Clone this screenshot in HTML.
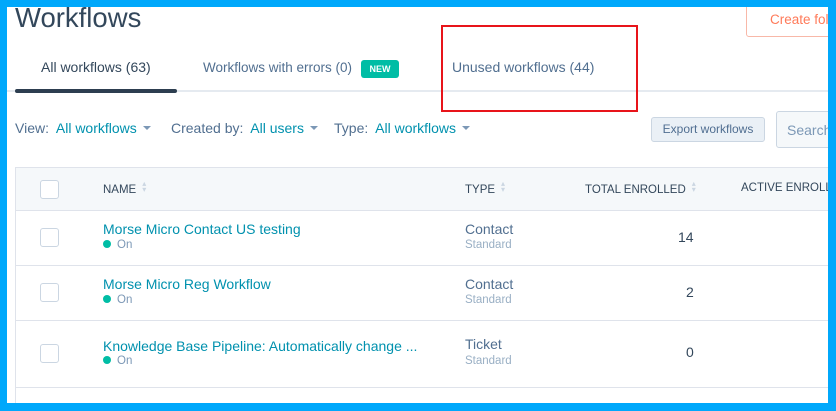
<!DOCTYPE html>
<html><head><meta charset="utf-8"><style>
*{margin:0;padding:0;box-sizing:border-box}
html,body{width:836px;height:411px;overflow:hidden;background:#00a8fb;font-family:"Liberation Sans",sans-serif}
#pg{position:absolute;left:7px;top:7px;width:821px;height:396px;background:#fff;overflow:hidden}
.a{position:absolute;white-space:nowrap}
.link{color:#0091ae}
.cb{position:absolute;width:19px;height:19px;border:1.5px solid #cbd6e2;border-radius:3px;background:#fff}
.dot{display:inline-block;width:8px;height:8px;border-radius:50%;background:#00bda5;margin-right:6px;vertical-align:0}
.caret{display:inline-block;width:0;height:0;border-left:4px solid transparent;border-right:4px solid transparent;border-top:4px solid #7c98b6;margin-left:6px;vertical-align:3px}
.sort{display:inline-block;margin-left:6px;color:#cbd6e2;font-size:8px;line-height:6px;vertical-align:1px}
.hl{position:absolute;left:8px;right:0;height:1px;background:#dfe3eb}
</style></head><body><div id="pg">
<div class="a" style="left:8px;top:-5px;font-size:27.5px;color:#33475b">Workflows</div>
<div class="a" style="left:739px;top:-10px;width:100px;height:40px;border:1px solid #f8b8a8;border-radius:3px;color:#ff7a59;font-size:13.5px;padding:14px 0 0 23px">Create folder</div>
<div class="a" style="left:34px;top:52px;font-size:14px;color:#33475b">All workflows (63)</div>
<div class="a" style="left:196px;top:53px;font-size:13.5px;color:#516f90">Workflows with errors (0)</div>
<div class="a" style="left:354px;top:53px;width:38px;height:18px;background:#00bda5;border-radius:3px;color:#fff;font-size:9px;font-weight:bold;text-align:center;line-height:18px">NEW</div>
<div class="a" style="left:445px;top:52px;font-size:14px;color:#516f90">Unused workflows (44)</div>
<div class="a" style="left:0;top:83px;width:821px;height:2px;background:#e5eaf0"></div>
<div class="a" style="left:8px;top:82px;width:162px;height:4px;background:#2d3e50;border-radius:2px"></div>
<div class="a" style="left:434px;top:18px;width:197px;height:87px;border:2px solid #e8141a"></div>
<div class="a" style="left:8px;top:113px;font-size:14px;color:#516f90">View: <span class="link" style="margin-left:3px">All workflows</span><span class="caret"></span></div>
<div class="a" style="left:164px;top:113px;font-size:14px;color:#516f90">Created by: <span class="link" style="margin-left:3px">All users</span><span class="caret"></span></div>
<div class="a" style="left:327px;top:113px;font-size:14px;color:#516f90">Type: <span class="link" style="margin-left:3px">All workflows</span><span class="caret"></span></div>
<div class="a" style="left:644px;top:110px;width:114px;height:25px;background:#eaf0f6;border:1px solid #cbd6e2;border-radius:3px;color:#506e91;font-size:12px;text-align:center;line-height:23px">Export workflows</div>
<div class="a" style="left:769px;top:104px;width:70px;height:37px;background:#f5f8fa;border:1px solid #cbd6e2;border-radius:3px;color:#7c98b6;font-size:14px;padding:10px 0 0 10px">Search</div>
<div class="a" style="left:8px;top:160px;width:820px;height:44px;background:#f5f8fa;border-top:1px solid #dfe3eb;border-bottom:1px solid #dfe3eb"></div>
<div class="a" style="left:8px;top:160px;width:1px;height:240px;background:#dfe3eb"></div>
<div class="cb" style="left:33px;top:173px"></div>
<div class="a" style="left:96px;top:174px;font-size:11.5px;color:#33475b">NAME<span class="sort">▴<br>▾</span></div>
<div class="a" style="left:458px;top:174px;font-size:11.5px;color:#33475b">TYPE<span class="sort">▴<br>▾</span></div>
<div class="a" style="left:578px;top:174px;font-size:11.5px;color:#33475b">TOTAL ENROLLED<span class="sort">▴<br>▾</span></div>
<div class="a" style="left:734px;top:175px;font-size:11.5px;line-height:13px;color:#33475b">ACTIVE ENROLLED</div>

<div class="cb" style="left:33px;top:221px"></div>
<div class="a link" style="left:96px;top:214px;font-size:14px">Morse Micro Contact US testing</div>
<div class="a" style="left:96px;top:232px;font-size:11.5px;color:#7c98b6"><span class="dot"></span>On</div>
<div class="a" style="left:458px;top:214px;font-size:14px;color:#516f90">Contact</div>
<div class="a" style="left:458px;top:232px;font-size:11.5px;color:#99afc4">Standard</div>
<div class="a" style="left:671px;top:222px;font-size:14px;color:#33475b">14</div>
<div class="hl" style="top:258px"></div>

<div class="cb" style="left:33px;top:276px"></div>
<div class="a link" style="left:96px;top:269px;font-size:14px">Morse Micro Reg Workflow</div>
<div class="a" style="left:96px;top:287px;font-size:11.5px;color:#7c98b6"><span class="dot"></span>On</div>
<div class="a" style="left:458px;top:269px;font-size:14px;color:#516f90">Contact</div>
<div class="a" style="left:458px;top:287px;font-size:11.5px;color:#99afc4">Standard</div>
<div class="a" style="left:679px;top:277px;font-size:14px;color:#33475b">2</div>
<div class="hl" style="top:313px"></div>

<div class="cb" style="left:33px;top:337px"></div>
<div class="a link" style="left:96px;top:331px;font-size:14px">Knowledge Base Pipeline: Automatically change ...</div>
<div class="a" style="left:96px;top:348px;font-size:11.5px;color:#7c98b6"><span class="dot"></span>On</div>
<div class="a" style="left:458px;top:329px;font-size:14px;color:#516f90">Ticket</div>
<div class="a" style="left:458px;top:348px;font-size:11.5px;color:#99afc4">Standard</div>
<div class="a" style="left:679px;top:337px;font-size:14px;color:#33475b">0</div>
<div class="hl" style="top:380px"></div>
</div></body></html>
